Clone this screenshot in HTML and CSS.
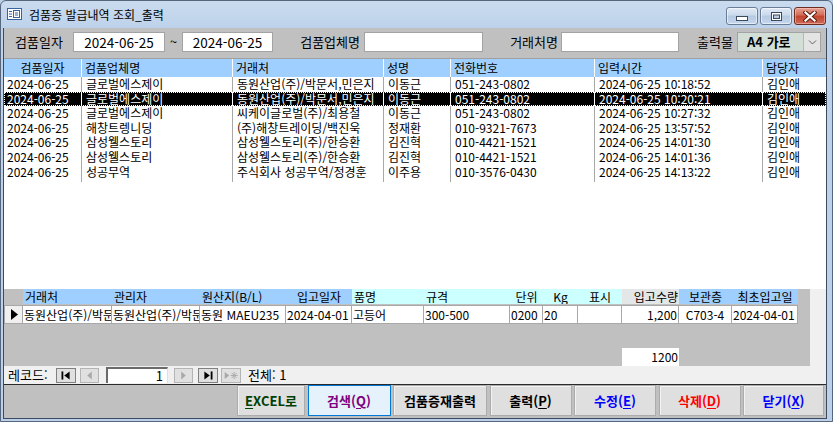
FILE: index.html
```html
<!DOCTYPE html>
<html lang="ko">
<head>
<meta charset="utf-8">
<title>검품증 발급내역 조회_출력</title>
<link rel="stylesheet" href="styles.css">
</head>
<body>
<div class="window">
  <div class="titlebar">
    <svg class="ticon" width="15" height="12" viewBox="0 0 15 12">
      <rect x="0.5" y="0.5" width="14" height="11" fill="#fff" stroke="#3a64a0"/>
      <path d="M2 3.5h3M2 6h3M2 8.5h3" stroke="#3a64a0"/>
      <rect x="6.5" y="2.5" width="6" height="7" fill="none" stroke="#3a64a0"/>
      <path d="M8 5h3M8 7h3" stroke="#3a64a0"/>
    </svg>
    <span class="title">검품증 발급내역 조회_출력</span>
    <div class="wbtns">
      <div class="wbtn">
        <svg width="12" height="5" viewBox="0 0 12 5"><rect x="0.5" y="0.5" width="11" height="4" fill="#fff" stroke="#3b4a5e"/></svg>
      </div>
      <div class="wbtn">
        <svg width="11" height="9" viewBox="0 0 11 9"><rect x="0.5" y="0.5" width="10" height="8" fill="#fff" stroke="#3b4a5e"/><rect x="2.5" y="3" width="6" height="3.5" fill="#b9cce4" stroke="#3b4a5e"/></svg>
      </div>
      <div class="wbtn close">
        <svg width="14" height="11" viewBox="0 0 14 11"><path d="M2.5 1.5L11.5 9.5M11.5 1.5L2.5 9.5" stroke="#5a1d14" stroke-width="4.2" stroke-linecap="square"/><path d="M2.5 1.5L11.5 9.5M11.5 1.5L2.5 9.5" stroke="#fff" stroke-width="2.2" stroke-linecap="square"/></svg>
      </div>
    </div>
  </div>

  <div class="client">
    <div class="filter">
      <span class="lbl l1">검품일자</span>
      <div class="inp i1">2024-06-25</div>
      <span class="tilde">~</span>
      <div class="inp i2">2024-06-25</div>
      <span class="lbl l2">검품업체명</span>
      <div class="inp i3"></div>
      <span class="lbl l3">거래처명</span>
      <div class="inp i4"></div>
      <span class="lbl l4">출력물</span>
      <div class="combo">
        <span class="combo-text">A4 가로</span>
        <span class="combo-btn"><svg width="9" height="6" viewBox="0 0 9 6"><path d="M1 1.5L4.5 5L8 1.5" fill="none" stroke="#606060"/></svg></span>
      </div>
    </div>

    <div class="list">
      <div class="lhead">
        <div class="c c1 center">검품일자</div>
        <div class="c">검품업체명</div>
        <div class="c">거래처</div>
        <div class="c">성명</div>
        <div class="c">전화번호</div>
        <div class="c">입력시간</div>
        <div class="c last">담당자</div>
      </div>
      <div class="lrow">
        <div class="c c1">2024-06-25</div><div class="c">글로벌에스제이</div><div class="c">동원산업(주)/박문서,민은지</div><div class="c">이동근</div><div class="c">051-243-0802</div><div class="c">2024-06-25 10:18:52</div><div class="c last">김인애</div>
      </div>
      <div class="lrow sel">
        <div class="c c1">2024-06-25</div><div class="c">글로벌에스제이</div><div class="c">동원산업(주)/박문서,민은지</div><div class="c">이동근</div><div class="c">051-243-0802</div><div class="c">2024-06-25 10:20:21</div><div class="c last">김인애</div>
      </div>
      <div class="lrow">
        <div class="c c1">2024-06-25</div><div class="c">글로벌에스제이</div><div class="c">씨케이글로벌(주)/최용철</div><div class="c">이동근</div><div class="c">051-243-0802</div><div class="c">2024-06-25 10:27:32</div><div class="c last">김인애</div>
      </div>
      <div class="lrow">
        <div class="c c1">2024-06-25</div><div class="c">해창트렝니딩</div><div class="c">(주)해창트레이딩/백진욱</div><div class="c">정재환</div><div class="c">010-9321-7673</div><div class="c">2024-06-25 13:57:52</div><div class="c last">김인애</div>
      </div>
      <div class="lrow">
        <div class="c c1">2024-06-25</div><div class="c">삼성웰스토리</div><div class="c">삼성웰스토리(주)/한승환</div><div class="c">김진혁</div><div class="c">010-4421-1521</div><div class="c">2024-06-25 14:01:30</div><div class="c last">김인애</div>
      </div>
      <div class="lrow">
        <div class="c c1">2024-06-25</div><div class="c">삼성웰스토리</div><div class="c">삼성웰스토리(주)/한승환</div><div class="c">김진혁</div><div class="c">010-4421-1521</div><div class="c">2024-06-25 14:01:36</div><div class="c last">김인애</div>
      </div>
      <div class="lrow">
        <div class="c c1">2024-06-25</div><div class="c">성공무역</div><div class="c">주식회사 성공무역/정경훈</div><div class="c">이주용</div><div class="c">010-3576-0430</div><div class="c">2024-06-25 14:13:22</div><div class="c last">김인애</div>
      </div>
      <div class="lrow tail">
        <div class="c c1"></div><div class="c"></div><div class="c"></div><div class="c"></div><div class="c"></div><div class="c"></div><div class="c last"></div>
      </div>
    </div>

    <div class="sub">
      <div class="subbody">
        <div class="sgrid shead">
          <div class="h gray"></div>
          <div class="h blue">거래처</div>
          <div class="h blue">관리자</div>
          <div class="h blue">원산지(B/L)</div>
          <div class="h blue center">입고일자</div>
          <div class="h cyan">품명</div>
          <div class="h cyan">규격</div>
          <div class="h cyan center">단위</div>
          <div class="h cyan center">Kg</div>
          <div class="h cyan center">표시</div>
          <div class="h lgray right">입고수량</div>
          <div class="h blue center">보관층</div>
          <div class="h blue center">최초입고일</div>
        </div>
        <div class="sgrid sdata">
          <div class="d selector"><svg width="7" height="11" viewBox="0 0 7 11"><path d="M0 0L7 5.5L0 11Z" fill="#000"/></svg></div>
          <div class="d">동원산업(주)/박문서</div>
          <div class="d">동원산업(주)/박문서</div>
          <div class="d">동원 MAEU235</div>
          <div class="d">2024-04-01</div>
          <div class="d">고등어</div>
          <div class="d">300-500</div>
          <div class="d">0200</div>
          <div class="d">20</div>
          <div class="d"></div>
          <div class="d right">1,200</div>
          <div class="d center">C703-4</div>
          <div class="d">2024-04-01</div>
        </div>
        <div class="sgrid stotal">
          <div class="tot">1200</div>
        </div>
      </div>
      <div class="subrest"></div>
    </div>

    <div class="nav">
      <span class="navlbl">레코드:</span>
      <span class="nb n-first"><svg width="20" height="15" viewBox="0 0 20 15"><rect x="5" y="3" width="2" height="9" fill="#000"/><path d="M14 3L8 7.5L14 12Z" fill="#000"/></svg></span>
      <span class="nb n-prev"><svg width="19" height="15" viewBox="0 0 19 15"><path d="M12 3L7 7.5L12 12Z" fill="#a8a8a8"/></svg></span>
      <span class="recbox">1</span>
      <span class="nb n-next"><svg width="19" height="15" viewBox="0 0 19 15"><path d="M7 3L12 7.5L7 12Z" fill="#a8a8a8"/></svg></span>
      <span class="nb n-last"><svg width="20" height="15" viewBox="0 0 20 15"><path d="M6 3L12 7.5L6 12Z" fill="#000"/><rect x="13" y="3" width="2" height="9" fill="#000"/></svg></span>
      <span class="nb n-new"><svg width="20" height="15" viewBox="0 0 20 15"><path d="M3 3.5L8 7.5L3 11.5Z" fill="#a8a8a8"/><path d="M13.5 3.5V11.5M9.5 7.5H17.5M10.7 4.7L16.3 10.3M16.3 4.7L10.7 10.3" stroke="#a8a8a8" stroke-width="1"/></svg></span>
      <span class="navtot">전체: 1</span>
    </div>

    <div class="btns">
      <button class="btn b-excel"><u>E</u>XCEL로</button>
      <button class="btn b-search">검색(<u>Q</u>)</button>
      <button class="btn b-cert">검품증재출력</button>
      <button class="btn b-print">출력(<u>P</u>)</button>
      <button class="btn b-edit">수정(<u>E</u>)</button>
      <button class="btn b-del">삭제(<u>D</u>)</button>
      <button class="btn b-close">닫기(<u>X</u>)</button>
    </div>
  </div>
</div>
</body>
</html>
```

FILE: styles.css
```css
* { box-sizing: border-box; }
html, body { margin: 0; padding: 0; background: #bcd2ea; }
body {
  font-family: "Noto Sans CJK KR", "Noto Sans", sans-serif;
  font-size: 12px;
  color: #000;
}

.window {
  width: 833px;
  height: 422px;
  border: 1px solid #56667c;
  border-radius: 6px 6px 0 0;
  background: linear-gradient(#cadbee, #bdd2ea 27px, #bcd1e9);
  display: flex;
  flex-direction: column;
  overflow: hidden;
}

/* Title bar */
.titlebar {
  height: 27px;
  display: flex;
  align-items: center;
  padding-left: 6px;
}
.ticon { display: block; margin-top: -1px; }
.title {
  margin-left: 7px;
  font-size: 12px;
  line-height: 16px;
  color: #000;
}
.wbtns {
  margin-left: auto;
  margin-right: 6px;
  align-self: flex-start;
  margin-top: 6px;
  display: flex;
  gap: 2px;
}
.wbtn {
  width: 32px;
  height: 18px;
  border: 1px solid #6a7d96;
  border-radius: 3px;
  background: linear-gradient(#e2ebf6, #cad9ec 45%, #b5c9e2 50%, #c5d7ed);
  box-shadow: inset 0 0 0 1px rgba(255,255,255,0.55);
  display: flex;
  align-items: center;
  justify-content: center;
}
.wbtn:first-child svg { margin-top: 5px; }
.wbtn.close {
  width: 32px;
  border-color: #6e2b20;
  background: linear-gradient(#e6a393, #d46a56 45%, #c2432d 50%, #cf6a55);
  box-shadow: inset 0 0 0 1px rgba(255,210,200,0.5);
}

/* Client area */
.client {
  margin: 0 5px 0 2px;
  height: 391px;
  border-left: 1px solid #3d4b5e;
  border-right: 1px solid #3d4b5e;
  border-bottom: 1px solid #3d4b5e;
  background: #c0c0c0;
  display: flex;
  flex-direction: column;
}

/* Filter row */
.filter {
  height: 30px;
  display: flex;
  align-items: flex-start;
  padding: 4px 0 0 11px;
  font-size: 13px;
}
.lbl, .tilde { line-height: 20px; white-space: nowrap; }
.l1 { width: 58px; }
.l2 { width: 91px; text-align: right; padding-right: 4px; }
.l3 { width: 78px; text-align: right; padding-right: 3px; }
.l4 { width: 58px; text-align: right; padding-right: 4px; }
.tilde { width: 17px; text-align: center; }
.inp {
  height: 20px;
  background: #fff;
  border: 1px solid #a3a3a3;
  line-height: 18px;
  text-align: center;
  font-size: 13.5px;
}
.i1 { width: 92px; }
.i2 { width: 91px; }
.i3 { width: 119px; }
.i4 { width: 118px; }
.combo {
  width: 84px;
  height: 20px;
  border: 1px solid #a3a3a3;
  background: #d3dfd6;
  display: flex;
}
.combo-text {
  flex: 1;
  line-height: 18px;
  font-weight: bold;
  padding-left: 9px;
  font-size: 13px;
}
.combo-btn {
  width: 17px;
  border-left: 1px solid #b8b8b8;
  background: #e4e4e4;
  display: flex;
  align-items: center;
  justify-content: center;
}

/* Main list */
.list {
  height: 231px;
  background: #fff;
  border-top: 1px solid #a0a0a0;
}
.lhead, .lrow {
  display: grid;
  grid-template-columns: 78px 151px 151px 67px 144px 168px 63px;
}
.lhead {
  height: 18px;
  background: #9fcfff;
  line-height: 18px;
}
.lhead .c { border-right: 1px solid #fff; padding-left: 3px; white-space: nowrap; overflow: hidden; }
.lhead .c.last { border-right: 0; }
.center { text-align: center; }
.right { text-align: right; }
.lhead .c.center { padding-left: 0; }
.lrow {
  height: 14.6px;
  line-height: 14.6px;
}
.lrow .c {
  border-right: 1px solid #a8a8a8;
  padding-left: 4px;
  white-space: nowrap;
  overflow: hidden;
}
.lrow .c.c1 { padding-left: 3px; }
.lrow .c.last { border-right: 0; }
.lrow.sel {
  background: #000;
  color: #fff;
  outline: 1px dotted #fff;
  outline-offset: -1px;
}
.lrow.sel .c { border-right-color: #fff; }
.lrow.tail { height: 3px; }

/* Subform */
.sub {
  height: 77px;
  display: flex;
}
.subbody {
  width: 806px;
  background: #c0c0c0;
}
.subrest {
  flex: 1;
  background: #f0f0f0;
}
.sgrid {
  display: grid;
  grid-template-columns: 19px 89px 88px 86px 66px 72px 86px 33px 35px 44px 57px 53px 66px;
}
.shead { height: 15px; line-height: 15px; }
.h { padding-left: 2px; white-space: nowrap; overflow: hidden; }
.h.center { padding-left: 0; }
.h.right { padding-left: 0; padding-right: 1px; }
.blue { background: #9fcfff; }
.cyan { background: #ccffff; }
.lgray { background: #e4e7e7; }
.gray { background: #c0c0c0; }
.sdata {
  margin-top: 1px;
  height: 19px;
}
.d {
  background: #fff;
  border-top: 1px solid #a8a8a8;
  border-bottom: 1px solid #a8a8a8;
  border-right: 1px solid #a8a8a8;
  line-height: 17px;
  padding-left: 1px;
  white-space: nowrap;
  overflow: hidden;
}
.d.right { padding-right: 1px; }
.d.center { padding-left: 0; }
.d.selector {
  background: #f0f0f0;
  border-left: 1px solid #a8a8a8;
  display: flex;
  align-items: center;
  justify-content: center;
}
.stotal { margin-top: 24px; height: 18px; }
.tot {
  grid-column: 11;
  background: #fff;
  text-align: right;
  line-height: 18px;
  padding-right: 1px;
}

/* Navigation bar */
.nav {
  height: 19px;
  background: #f0f0f0;
  border-bottom: 1px solid #2a2a2a;
  display: flex;
  align-items: center;
  padding-left: 4px;
  font-size: 13px;
}
.navlbl { width: 48px; line-height: 16px; padding-left: 0; }
.nb {
  height: 15px;
  background: #e0e0e0;
  border: 1px solid #b4b4b4;
  display: flex;
  align-items: center;
  justify-content: center;
}
.nb svg { display: block; }
.n-first { width: 20px; }
.n-prev { width: 19px; margin-left: 4px; }
.recbox {
  width: 62px;
  height: 16px;
  margin-left: 7px;
  background: #fff;
  border-top: 2px solid #6a6a6a;
  border-left: 2px solid #6a6a6a;
  border-right: 1px solid #e0e0e0;
  text-align: right;
  padding-right: 4px;
  line-height: 14px;
}
.n-next { width: 19px; margin-left: 6px; }
.n-last { width: 20px; margin-left: 5px; border-color: #808080; }
.n-first { border-color: #808080; }
.n-new { width: 20px; margin-left: 3px; }
.navtot { margin-left: 7px; line-height: 16px; }

/* Buttons */
.btns {
  flex: 1;
  display: flex;
  justify-content: flex-end;
  align-items: flex-start;
  gap: 2.5px;
  padding-right: 2px;
}
.btn {
  height: 31px;
  border: 1px solid #acacac;
  background: #dfdfdf;
  box-shadow: inset 1px 1px 0 #f2f2f2;
  font-family: "Noto Sans CJK KR", "Noto Sans", sans-serif;
  font-size: 13px;
  font-weight: bold;
  padding: 0;
  line-height: 29px;
  color: #000;
}
.btn u { text-underline-offset: 2px; }
.b-excel { width: 68px; color: #004000; }
.b-search { width: 83px; color: #800080; background: #e5f1fb; border-color: #0078d7; box-shadow: none; }
.b-cert { width: 94px; }
.b-print { width: 82px; }
.b-edit { width: 82px; color: #0000ff; }
.b-del { width: 82px; color: #ff0000; }
.b-close { width: 81px; color: #0000ff; }
```
